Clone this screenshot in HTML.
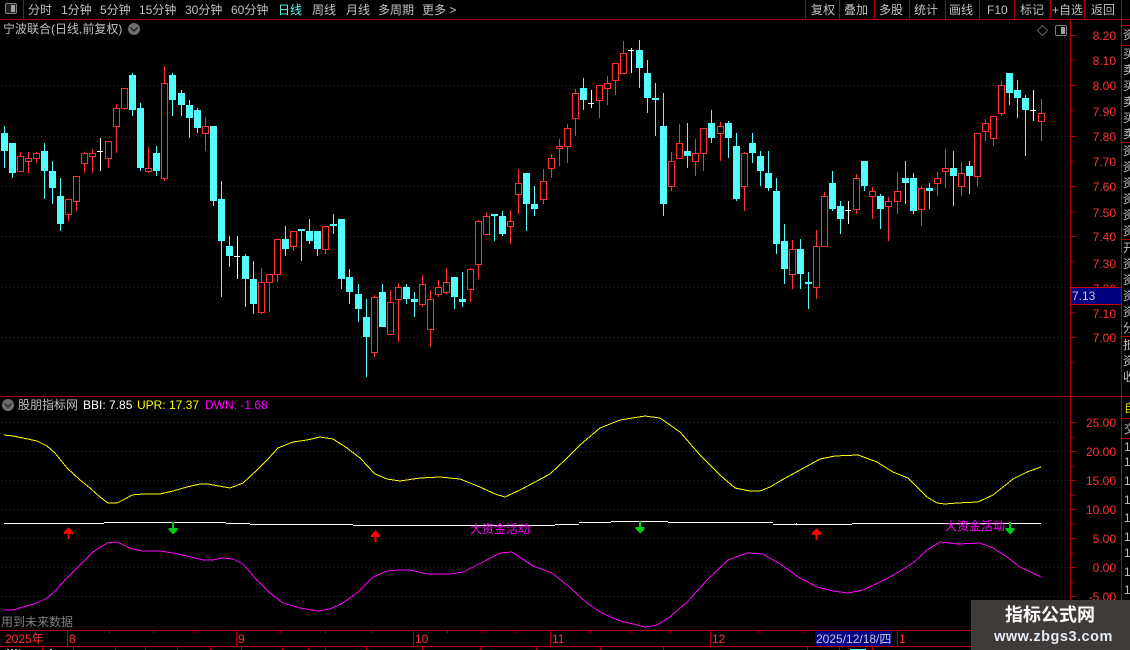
<!DOCTYPE html>
<html><head><meta charset="utf-8"><style>
html,body{margin:0;padding:0;background:#000;width:1130px;height:650px;overflow:hidden}
svg{position:absolute;left:0;top:0}
text{font-family:"Liberation Sans","WenQuanYi Zen Hei","Noto Sans CJK SC",sans-serif;font-size:12px}
.t text{fill:#c0c0c0}
.a text{fill:#ff3232;text-anchor:end}
.s{position:absolute;left:1123px;width:7px;overflow:hidden;white-space:pre;font:12px/16px "WenQuanYi Zen Hei","Noto Sans CJK SC",sans-serif;color:#c0c0c0}
</style></head><body>
<svg width="1130" height="650" viewBox="0 0 1130 650">
<rect width="1130" height="650" fill="#000"/>
<g stroke="#a00000" stroke-dasharray="1 3" shape-rendering="crispEdges" fill="none">
<path d="M1 85.5H1070M1 136.5H1070M1 186.5H1070M1 236.5H1070M1 287.5H1070M1 337.5H1070M1 422.5H1070M1 451.5H1070M1 480.5H1070M1 509.5H1070M1 538.5H1070M1 567.5H1070M1 596.5H1070"/>
</g>
<g shape-rendering="crispEdges">
<path fill="none" stroke="#54fcfc" d="M4.5 126V168M12.5 143V178M44.5 143V199M52.5 161V204M60.5 178V231M132.5 73V116M140.5 103V171M156.5 146V176M172.5 73V116M181.5 90V116M189.5 100V138M197.5 108V133M213.5 126V206M221.5 181V297M229.5 236V267M245.5 254V307M253.5 261V314M285.5 226V256M301.5 229V261M309.5 219V244M317.5 231V256M333.5 214V234M341.5 219V289M349.5 269V304M358.5 284V322M366.5 299V377M382.5 284V327M406.5 284V304M414.5 292V317M454.5 277V309M462.5 272V307M494.5 214V241M502.5 211V236M526.5 173V231M534.5 186V216M583.5 78V110M639.5 40V88M647.5 60V113M655.5 83V136M663.5 93V216M687.5 123V168M711.5 110V143M728.5 121V158M736.5 133V201M752.5 133V163M760.5 151V186M768.5 151V191M776.5 178V254M784.5 224V284M800.5 239V289M808.5 272V309M832.5 171V211M840.5 201V234M864.5 161V191M880.5 194V229M905.5 161V204M913.5 173V214M929.5 183V209M953.5 151V206M969.5 161V194M1009.5 73V105M1017.5 80V118M1025.5 95V156"/>
<path fill="#54fcfc" d="M1 133h7V151h-7zM9 143h7V173h-7zM41 151h7V171h-7zM49 171h7V188h-7zM57 196h7V224h-7zM129 75h7V110h-7zM137 108h7V168h-7zM153 153h7V171h-7zM169 75h7V100h-7zM178 93h7V105h-7zM186 105h7V118h-7zM194 110h7V128h-7zM210 126h7V201h-7zM218 199h7V241h-7zM226 246h7V256h-7zM242 256h7V279h-7zM250 279h7V304h-7zM282 239h7V249h-7zM298 229h7V231h-7zM306 231h7V241h-7zM314 231h7V249h-7zM330 224h7V226h-7zM338 219h7V279h-7zM346 277h7V292h-7zM355 294h7V309h-7zM363 317h7V337h-7zM379 292h7V327h-7zM403 287h7V299h-7zM411 299h7V302h-7zM451 277h7V297h-7zM459 299h7V302h-7zM491 214h7V216h-7zM499 216h7V234h-7zM523 173h7V204h-7zM531 204h7V209h-7zM580 88h7V100h-7zM636 50h7V68h-7zM644 73h7V98h-7zM652 98h7V100h-7zM660 126h7V204h-7zM684 151h7V156h-7zM708 123h7V138h-7zM725 123h7V138h-7zM733 146h7V199h-7zM749 143h7V153h-7zM757 156h7V171h-7zM765 173h7V188h-7zM773 191h7V244h-7zM781 241h7V269h-7zM797 249h7V274h-7zM805 282h7V284h-7zM829 183h7V209h-7zM837 206h7V219h-7zM861 161h7V186h-7zM877 196h7V209h-7zM902 178h7V183h-7zM910 178h7V211h-7zM926 188h7V191h-7zM950 168h7V176h-7zM966 166h7V176h-7zM1006 73h7V93h-7zM1014 90h7V98h-7zM1022 98h7V110h-7z"/>
<path fill="none" stroke="#ff3232" d="M20.5 152V172M28.5 152V173M36.5 152V163M68.5 199V221M76.5 176V211M84.5 152V173M92.5 149V173M108.5 141V168M116.5 104V153M124.5 88V110M148.5 147V173M164.5 66V181M205.5 117V151M261.5 268V314M269.5 274V312M277.5 239V282M293.5 231V251M325.5 226V254M374.5 295V357M390.5 290V335M398.5 283V342M422.5 275V307M430.5 290V347M438.5 280V297M446.5 268V294M470.5 268V302M478.5 220V279M486.5 212V235M510.5 210V244M518.5 169V214M543.5 169V204M551.5 154V178M559.5 139V166M567.5 124V163M575.5 89V136M599.5 85V118M607.5 76V105M615.5 63V95M623.5 41V74M671.5 152V191M679.5 124V159M695.5 139V176M703.5 128V171M720.5 122V161M744.5 152V211M792.5 240V289M816.5 230V299M824.5 192V247M856.5 174V214M872.5 187V219M888.5 197V241M897.5 172V214M921.5 186V226M937.5 172V196M945.5 149V188M961.5 162V196M977.5 133V186M985.5 119V141M993.5 116V146M1001.5 81V116M1041.5 99V141"/>
<path fill="#000" stroke="#ff3232" d="M17.5 156.5h6V171.5h-6zM25.5 158.5h6V161.5h-6zM33.5 153.5h6V158.5h-6zM65.5 199.5h6V214.5h-6zM73.5 176.5h6V201.5h-6zM81.5 153.5h6V163.5h-6zM89.5 153.5h6V156.5h-6zM105.5 141.5h6V158.5h-6zM113.5 108.5h6V126.5h-6zM121.5 88.5h6V108.5h-6zM145.5 168.5h6V171.5h-6zM161.5 83.5h6V178.5h-6zM202.5 126.5h6V133.5h-6zM258.5 282.5h6V312.5h-6zM266.5 274.5h6V282.5h-6zM274.5 239.5h6V274.5h-6zM290.5 231.5h6V246.5h-6zM322.5 226.5h6V249.5h-6zM371.5 297.5h6V352.5h-6zM387.5 302.5h6V334.5h-6zM395.5 287.5h6V299.5h-6zM419.5 284.5h6V304.5h-6zM427.5 299.5h6V329.5h-6zM435.5 287.5h6V294.5h-6zM443.5 282.5h6V292.5h-6zM467.5 269.5h6V289.5h-6zM475.5 221.5h6V264.5h-6zM483.5 216.5h6V234.5h-6zM507.5 221.5h6V226.5h-6zM515.5 183.5h6V194.5h-6zM540.5 181.5h6V199.5h-6zM548.5 158.5h6V168.5h-6zM556.5 146.5h6V148.5h-6zM564.5 128.5h6V146.5h-6zM572.5 93.5h6V118.5h-6zM596.5 85.5h6V100.5h-6zM604.5 83.5h6V88.5h-6zM612.5 63.5h6V80.5h-6zM620.5 53.5h6V73.5h-6zM668.5 161.5h6V186.5h-6zM676.5 143.5h6V158.5h-6zM692.5 153.5h6V161.5h-6zM700.5 128.5h6V153.5h-6zM717.5 126.5h6V133.5h-6zM741.5 153.5h6V186.5h-6zM789.5 249.5h6V274.5h-6zM813.5 246.5h6V287.5h-6zM821.5 196.5h6V246.5h-6zM853.5 178.5h6V209.5h-6zM869.5 191.5h6V196.5h-6zM885.5 201.5h6V206.5h-6zM894.5 191.5h6V201.5h-6zM918.5 188.5h6V209.5h-6zM934.5 178.5h6V183.5h-6zM942.5 168.5h6V171.5h-6zM958.5 173.5h6V186.5h-6zM974.5 133.5h6V176.5h-6zM982.5 123.5h6V131.5h-6zM990.5 116.5h6V138.5h-6zM998.5 85.5h6V113.5h-6zM1038.5 113.5h6V121.5h-6z"/>
<path fill="none" stroke="#fff" d="M100.5 138V171M97 151.5h6M237.5 236V279M234 256.5h6M591.5 90V108M588 103.5h6M631.5 48V73M628 50.5h6M848.5 201V224M845 210.5h6M1033.5 90V121M1030 110.5h6"/>
</g>
<g fill="none" shape-rendering="crispEdges">
<polyline stroke="#ffff00" points="4,435 13,436 23,438 37,441 47,446 55,453 67,468 80,480 90,488 100,497 108,503 117,503 125,499 132,495 143,494 160,494 173,491 187,487 200,484 208,484 230,488 243,483 257,470 268,459 278,448 293,442 307,440 320,437 333,439 347,448 360,458 375,474 387,479 400,481 420,478 440,477 460,479 480,487 495,494 505,497 520,490 550,474 565,460 580,445 600,428 620,420 645,416 660,418 680,432 700,455 720,475 735,488 750,491 760,491 770,487 780,481 800,470 820,459 835,456 858,455 877,462 893,472 908,478 927,497 937,503 945,504 957,503 978,502 993,495 1013,479 1027,472 1041,467"/>
<polyline stroke="#ff00ff" points="4,610 13,610 23,607 37,603 47,598 55,591 67,578 80,565 93,552 107,543 117,542 132,549 143,551 160,551 173,553 187,556 203,560 213,560 222,558 233,559 243,564 255,578 270,593 283,603 300,608 318,611 330,609 343,603 358,592 373,577 387,571 400,570 410,570 427,574 450,574 463,572 483,562 500,553 512,552 533,566 552,573 567,585 587,603 600,612 620,621 633,624 645,627 657,625 670,617 687,602 707,580 728,560 747,553 763,554 780,564 800,578 817,587 833,591 848,593 863,590 880,582 897,573 913,563 927,550 940,542 958,544 980,543 993,548 1007,557 1020,567 1041,577"/>
<path stroke="#fff" d="M4 523.5H104M104 522.5H226M226 523.5H250M250 524.5H353M353 525.5H555M555 524.5H579M579 522.5H611M611 521.5H668M668 522.5H773M773 524.5H797M797 523.5H796M796 524.5H852M852 523.5H1041"/>
</g>
<g shape-rendering="crispEdges">
<path fill="#ff0000" d="M68.5 527l4.500 5v2h-3.500v5h-2v-5h-3.500v-2zM375.500 530l4.500 5v2h-3.500v5h-2v-5h-3.500v-2zM816.500 528l4.500 5v2h-3.500v5h-2v-5h-3.500v-2z"/>
<path fill="#00cc11" d="M172 522h2v6h3.500v2l-4.500 4.500-4.500-4.500v-2h3.500zM639 521h2v6h3.500v2l-4.500 4.500-4.500-4.500v-2h3.500zM1009 522h2v6h3.500v2l-4.500 4.500-4.500-4.500v-2h3.500z"/>
<g fill="none" stroke="#b40000">
<path d="M0 19.500H1130M23.500 0V19M805.500 0V19M839.500 0V19M874.500 0V19M909.500 0V19M945.500 0V19M979.500 0V19M1014.500 0V19M1050.500 0V19M1084.500 0V19M1121.500 0V630M1070.500 19V630M0 396.500H1130M0 630.500H971M0 646.500H971M1122 418.500H1130M1122 438.500H1130M1122 25.500H1130M1122 45.500H1130M1122 142.500H1130M1122 239.500H1130M1122 336.500H1130"/>
<path d="M1071 35.500h5M1071 60.500h3M1071 85.500h5M1071 110.500h3M1071 136.500h5M1071 161.500h3M1071 186.500h5M1071 211.500h3M1071 236.500h5M1071 261.500h3M1071 287.500h5M1071 312.500h3M1071 337.500h5M1071 362.500h3M1071 422.500h5M1071 437.500h3M1071 451.500h5M1071 466.500h3M1071 480.500h5M1071 495.500h3M1071 509.500h5M1071 524.500h3M1071 538.500h5M1071 553.500h3M1071 567.500h5M1071 582.500h3M1071 596.500h5M1071 611.500h3"/>
<path d="M67.500 630V646M236.500 630V646M413.500 630V646M550.500 630V646M710.500 630V646M897.500 630V646M109.500 630v3M153.500 630v3M194.500 630v3M280.500 630v3M325.500 630v3M371.500 630v3M447.500 630v3M482.500 630v3M516.500 630v3M590.500 630v3M630.500 630v3M670.500 630v3M758.500 630v3M804.500 630v3M42.500 646v4M73.500 646v4M115.500 646v4M145.500 646v4M177.500 646v4M210.500 646v4M241.500 646v4M282.500 646v4M308.500 646v4M325.500 646v4M366.500 646v4M422.500 646v4M480.500 646v4M536.500 646v4M600.500 646v4M663.500 646v4M807.500 646v4M839.500 646v4M872.500 646v4"/>
</g>
</g>
<g class="t">
<text x="28" y="14">分时</text><text x="61" y="14">1分钟</text><text x="100" y="14">5分钟</text><text x="139" y="14">15分钟</text><text x="185" y="14">30分钟</text><text x="231" y="14">60分钟</text><text x="278" y="14" style="fill:#54fcfc">日线</text><text x="312" y="14">周线</text><text x="346" y="14">月线</text><text x="378" y="14">多周期</text><text x="422" y="14">更多 &gt;</text>
<text x="811" y="14">复权</text><text x="844" y="14">叠加</text><text x="879" y="14">多股</text><text x="914" y="14">统计</text><text x="949" y="14">画线</text><text x="987" y="14">F10</text><text x="1020" y="14">标记</text><text x="1052" y="14">+自选</text><text x="1091" y="14">返回</text>
<text x="3" y="33">宁波联合(日线,前复权)</text>
<text x="18" y="409">股朋指标网</text>
<text x="83" y="409" style="fill:#fff">BBI: 7.85</text>
<text x="137" y="409" style="fill:#ffff00">UPR: 17.37</text>
<text x="205" y="409" style="fill:#ff00ff">DWN: -1.68</text>
<text x="1" y="626" style="fill:#808080">用到未来数据</text>
<text x="470" y="533" style="fill:#ff00ff">大资金活动</text>
<text x="945" y="530" style="fill:#ff00ff">大资金活动</text>
<text x="1124" y="412" style="fill:#d8d800">自</text>
<text x="1124" y="433">交</text>
</g>
<g class="a">
<text x="1116" y="40">8.20</text><text x="1116" y="65">8.10</text><text x="1116" y="90">8.00</text><text x="1116" y="116">7.90</text><text x="1116" y="141">7.80</text><text x="1116" y="166">7.70</text><text x="1116" y="191">7.60</text><text x="1116" y="217">7.50</text><text x="1116" y="241">7.40</text><text x="1116" y="268">7.30</text><text x="1116" y="293">7.20</text><text x="1116" y="318">7.10</text><text x="1116" y="342">7.00</text>
<text x="1116" y="427">25.00</text><text x="1116" y="456">20.00</text><text x="1116" y="485">15.00</text><text x="1116" y="514">10.00</text><text x="1116" y="543">5.00</text><text x="1116" y="572">0.00</text><text x="1116" y="601">-5.00</text>
</g>
<path d="M1071 288H1121V304H1071z" fill="#000080"/>
<path d="M1071 287.500H1121M1071 304.500H1121" stroke="#c80000" shape-rendering="crispEdges"/>
<text x="1072" y="300" fill="#c8c8e0">7.13</text>
<g fill="#ff3232">
<text x="5" y="643">2025年</text><text x="69" y="643">8</text><text x="238" y="643">9</text><text x="415" y="643">10</text><text x="552" y="643">11</text><text x="712" y="643">12</text><text x="899" y="643">1</text>
</g>
<rect x="815" y="631" width="77" height="15" fill="#000080"/>
<text x="816" y="643" fill="#c8c8e0">2025/12/18/四</text>
<g fill="#c0c0c0">
<text x="1124" y="451">1</text><text x="1124" y="466">1</text><text x="1124" y="485">1</text><text x="1124" y="504">1</text><text x="1124" y="522">1</text><text x="1124" y="541">1</text><text x="1124" y="557">1</text><text x="1124" y="576">1</text><text x="1124" y="594">1</text>
</g>
<rect x="850" y="649" width="16" height="1" fill="#54fcfc"/>
<path d="M7 649.500H20M50 649.500H54" stroke="#c0c0c0" stroke-dasharray="2 2" shape-rendering="crispEdges"/>
<!-- icons -->
<g fill="none">
<rect x="5.500" y="3.500" width="11" height="10" rx="1.500" stroke="#808080" fill="#202020"/><rect x="11" y="5" width="4" height="7" fill="#a0a0a0"/>
<rect x="1055.500" y="25.500" width="11" height="10" rx="1.500" stroke="#808080"/><rect x="1061" y="27" width="4" height="7" fill="#a0a0a0"/>
<path d="M1042.500 25.500l5 5-5 5-5-5z" stroke="#606060"/>
<circle cx="134" cy="29" r="6" fill="#6e6e6e"/><path d="M130.500 27.500l3.500 3.500 3.500-3.500" stroke="#1a1a1a" stroke-width="1.300"/>
<circle cx="8" cy="405" r="6" fill="#6e6e6e"/><path d="M4.500 403.500l3.500 3.500 3.500-3.500" stroke="#1a1a1a" stroke-width="1.300"/>
</g>
<rect x="971" y="600" width="159" height="50" fill="#403a38"/>
<text x="1050" y="621" text-anchor="middle" fill="#fff" style="font-size:18px;font-weight:bold">指标公式网</text>
<text x="1053.500" y="641" text-anchor="middle" fill="#e4ecf8" style="font-size:14.500px;font-weight:bold;letter-spacing:.5px">www.zbgs3.com</text>
</svg>
<div class="s" style="top:27px;height:18px">资</div>
<div class="s" style="top:46px;height:96px">买
卖
买
卖
买
卖</div>
<div class="s" style="top:143px;height:96px">资
资
资
资
资
资</div>
<div class="s" style="top:240px;height:96px">开
资
资
资
资
分</div>
<div class="s" style="top:337px;height:60px">抵
资
收</div>
</body></html>
